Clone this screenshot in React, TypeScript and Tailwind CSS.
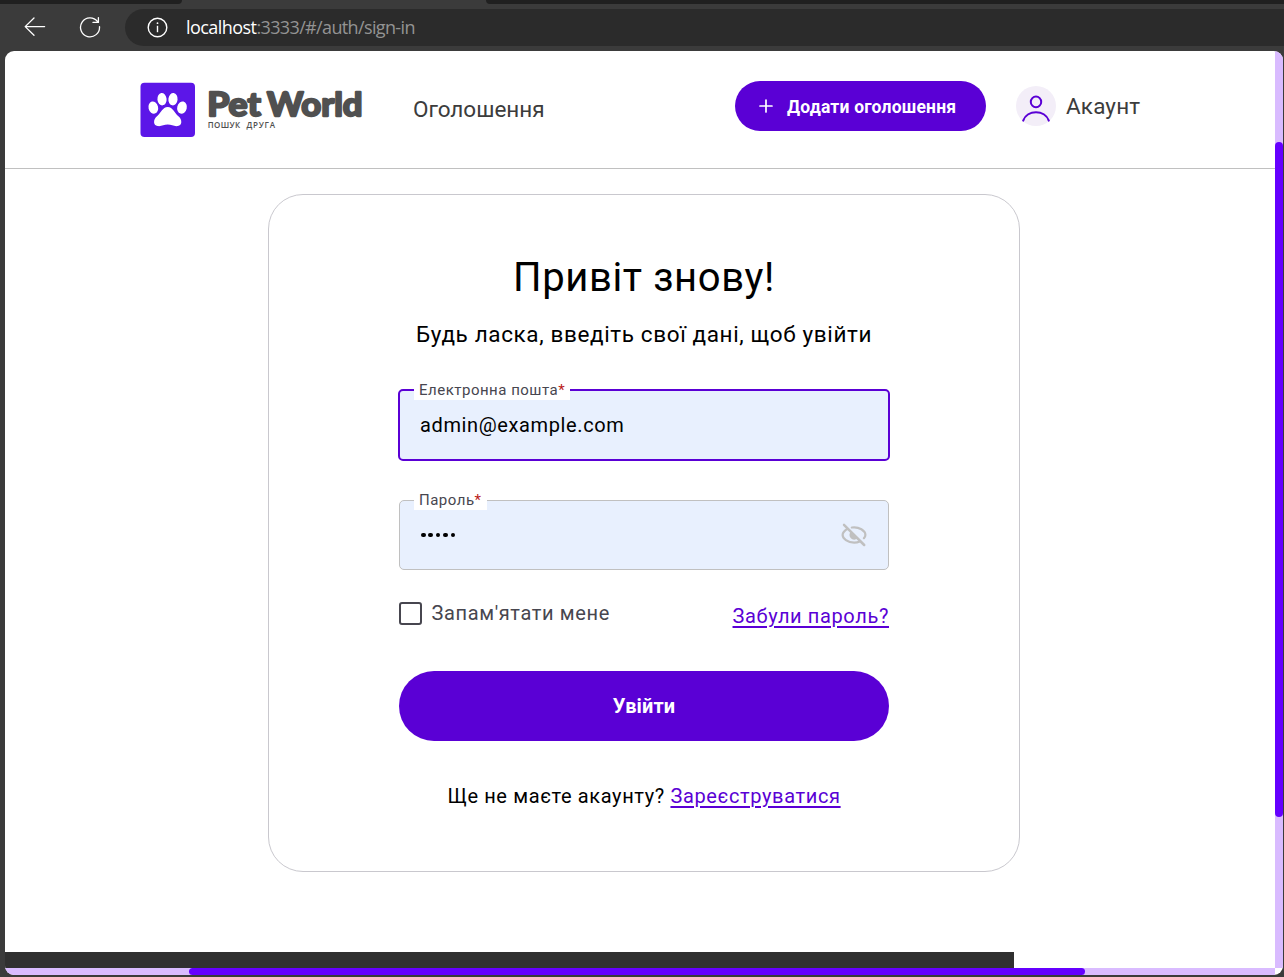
import React from 'react';

function BrowserBar() {
  return (
    <div className="h-[51px] bg-[#3b3b3b]">
      <div className="flex h-1 justify-between">
        <div className="h-1 w-[182px] rounded-br-[4px] bg-[#202020]" />
        <div className="h-1 w-[798px] rounded-bl-[4px] bg-[#202020]" />
      </div>
      <div className="flex h-[47px] pt-[5px]">
        <svg className="ml-6 mt-2 h-[22px] w-[22px]" viewBox="0 0 22 22" fill="none" stroke="#fff" strokeWidth="1.3" strokeLinecap="round" strokeLinejoin="round">
          <path d="M20.6 9.6H1.2M10 1L1.2 9.6L10 18.2" />
        </svg>
        <svg className="ml-[33px] mt-[7px] h-[22px] w-[22px]" viewBox="0 0 22 22" fill="none" stroke="#fff" strokeWidth="1.3" strokeLinecap="round" strokeLinejoin="round">
          <path d="M18.6 5.6A9.5 9.5 0 1 0 20.5 10.6M19.4 1.6V6.4H14" />
        </svg>
        <div className="ml-6 flex h-[37px] flex-1 items-center rounded-l-full bg-[#2b2b2b] pl-[22px]">
          <svg className="h-[21px] w-[21px]" viewBox="0 0 21 21" fill="none" stroke="#fff" strokeWidth="1.4">
            <circle cx="10.5" cy="10.5" r="9.3" />
            <path d="M10.5 8.8V15.2" />
            <circle cx="10.5" cy="6.2" r="0.9" fill="#fff" stroke="none" />
          </svg>
          <p className="-mt-px ml-[18px] whitespace-nowrap font-['Open_Sans','Noto_Sans',sans-serif] text-[18px] leading-6 tracking-[-0.64px] text-[#939393]">
            <span className="tracking-[-0.55px] text-white">localhost</span>:3333/#/auth/sign-in
          </p>
        </div>
      </div>
    </div>
  );
}

function Logo() {
  return (
    <svg className="h-[56px] w-[224px]" viewBox="0 0 224 56">
      <rect x="0.5" y="0.7" width="54.5" height="54.3" rx="4" fill="#5c16e8" />
      <g fill="#fff">
        <ellipse cx="22" cy="17.2" rx="4.6" ry="6.2" transform="rotate(-6 22 17.2)" />
        <ellipse cx="33" cy="17.2" rx="4.6" ry="6.2" transform="rotate(6 33 17.2)" />
        <ellipse cx="13.3" cy="25.6" rx="4.8" ry="6.2" transform="rotate(-14 13.3 25.6)" />
        <ellipse cx="42" cy="25.6" rx="4.8" ry="6.2" transform="rotate(14 42 25.6)" />
        <path d="M27.7 24.9C22.5 24.9 20.8 31.2 17 34.3C13 37.6 13 43.4 17.6 44.1C21.4 44.7 23.8 42.6 27.7 42.6C31.6 42.6 34 44.7 37.8 44.1C42.4 43.4 42.4 37.6 38.4 34.3C34.6 31.2 32.9 24.9 27.7 24.9Z" />
      </g>
      <g fill="#505050" fontFamily="'Lato','Inter',sans-serif">
        <text x="67.3" y="33.6" fontSize="33" fontWeight="700" stroke="#505050" strokeWidth="2.3" strokeLinejoin="round" textLength="53.5" lengthAdjust="spacingAndGlyphs">Pet</text>
        <text x="127" y="33.6" fontSize="33" fontWeight="700" stroke="#505050" strokeWidth="2.3" strokeLinejoin="round" textLength="95.5" lengthAdjust="spacingAndGlyphs">World</text>
        <text x="67.7" y="46" fontSize="8" fontWeight="600" fontFamily="'Open Sans',sans-serif" textLength="32.5">ПОШУК</text>
        <text x="106.5" y="46" fontSize="8" fontWeight="600" fontFamily="'Open Sans',sans-serif" textLength="28.5">ДРУГА</text>
      </g>
    </svg>
  );
}

function Header() {
  return (
    <header className="flex h-[118px] shrink-0 border-b border-[#c0c0c0] pl-[135px]">
      <div className="mt-[31px]"><Logo /></div>
      <nav className="ml-[49px] mt-[43px] w-[131px] whitespace-nowrap text-[22.5px] leading-[30px] text-[#3c3c3c]">Оголошення</nav>
      <button className="ml-[191px] mt-[30px] flex h-[50px] w-[251px] items-center rounded-full bg-[#5a00d5] pl-[23px] text-[17.5px] font-bold text-white">
        <svg className="h-4 w-4" viewBox="0 0 16 16" stroke="#fff" strokeWidth="1.7" strokeLinecap="round"><path d="M8 2V14M2 8H14" /></svg>
        <span className="ml-[13px] mt-[2px] whitespace-nowrap tracking-[0.2px]">Додати оголошення</span>
      </button>
      <div className="ml-[30px] mt-[35px] flex h-10 items-center">
        <svg className="h-10 w-10" viewBox="0 0 40 40" fill="none">
          <circle cx="20" cy="20" r="20" fill="#f3eef8" />
          <ellipse cx="20" cy="15.9" rx="5.2" ry="5.3" stroke="#5a00d5" strokeWidth="2" />
          <path d="M7.2 34.6C11 23.4 29 23.4 32.8 34.6" stroke="#5a00d5" strokeWidth="2.1" strokeLinecap="round" />
        </svg>
        <span className="ml-[10px] whitespace-nowrap text-[22.5px] leading-[30px] tracking-[0.15px] text-[#3c3c3c]">Акаунт</span>
      </div>
    </header>
  );
}

function FieldLabel({ children }: { children: React.ReactNode }) {
  return (
    <span className="absolute left-[14px] top-[-11px] h-[20px] whitespace-nowrap bg-white px-[5px] text-[15px] leading-[21px] tracking-[0.5px] text-[#47464f]">
      {children}<span className="text-[#ba1a1a]">*</span>
    </span>
  );
}

function SignInCard() {
  return (
    <main className="ml-[263px] mt-[25px] flex h-[678px] w-[752px] shrink-0 flex-col rounded-[35px] border border-[#c9c8ce] px-[130px] pt-[58px]">
      <h1 className="whitespace-nowrap text-center text-[40px] leading-[50px] tracking-[0.625px] text-black">Привіт знову!</h1>
      <p className="mt-[16px] whitespace-nowrap text-center text-[22.5px] leading-[30px] tracking-[0.625px] text-black">Будь ласка, введіть свої дані, щоб увійти</p>
      <div className="relative -mx-px mt-[40px] flex h-[72px] items-center rounded-[5px] border-2 border-[#5a00d5] bg-[#e8f0fe] px-5 text-[20px] tracking-[0.625px] text-black">
        <FieldLabel>Електронна пошта</FieldLabel>
        admin@example.com
      </div>
      <div className="relative mt-[39px] flex h-[70px] items-center justify-between rounded-[5px] border border-[#c0c0c0] bg-[#e8f0fe] px-[20px]">
        <FieldLabel>Пароль</FieldLabel>
        <div className="flex gap-[2.8px] pl-[1px]">
          {[0, 1, 2, 3, 4].map((i) => <i key={i} className="h-[4.6px] w-[4.6px] rounded-full bg-black" />)}
        </div>
        <svg className="h-[28px] w-[28px]" viewBox="0 0 28 28" fill="none" stroke="#c0c0c0" strokeWidth="2.2" strokeLinecap="round">
          <path d="M7.6 7.8C4.6 9.6 2.6 12.2 2.6 14C2.6 17.4 7.6 21.6 14.2 21.6C16.2 21.6 18.2 21.2 19.8 20.5M11.8 6.5C19.2 5.3 25.4 10 25.4 14C25.4 15.2 24.8 16.2 23.9 17.2" />
          <path d="M10.8 10.8L17.4 17.3A4.5 4.5 0 0 1 10.8 10.8Z" fill="#c0c0c0" stroke="none" />
          <path d="M4 3.8L24.2 24" strokeWidth="2.5" />
        </svg>
      </div>
      <div className="mt-[28px] flex justify-between whitespace-nowrap text-[20px] leading-[30px] tracking-[0.625px]">
        <div className="flex text-[#47464f]">
          <span className="mr-[9.5px] mt-1 h-[23px] w-[23px] rounded-[3px] border-2 border-[#47464f]" />
          Запам'ятати мене
        </div>
        <a className="mt-[3px] text-[#5a00d5] underline decoration-2 underline-offset-[3px]">Забули пароль?</a>
      </div>
      <button className="mt-[40px] h-[70px] shrink-0 rounded-full bg-[#5a00d5] text-[20px] font-bold tracking-[0.12px] text-white">Увійти</button>
      <p className="mt-[40px] whitespace-nowrap text-center text-[20px] leading-[30px] tracking-[0.625px] text-black">
        Ще не маєте акаунту? <a className="text-[#5a00d5] underline decoration-2 underline-offset-[3px]">Зареєструватися</a>
      </p>
    </main>
  );
}

export default function App() {
  return (
    <div className="h-[977px] w-[1284px] overflow-hidden bg-[#3b3b3b] font-['Roboto','Liberation_Sans',sans-serif]">
      <BrowserBar />
      <div className="ml-[5px] h-[924px] w-[1278px] overflow-hidden rounded-[9px] bg-white">
        <div className="flex h-[917px]">
          <div className="flex w-[1270px] flex-col">
            <Header />
            <SignInCard />
            <footer className="mt-auto h-4 w-[1009px] bg-[#303030]" />
          </div>
          <div className="w-[8px] bg-[#d9bbff] pt-[91px]">
            <div className="h-[675px] w-[7.5px] rounded-full bg-[#6500ff]" />
          </div>
        </div>
        <div className="h-[7px] w-[1270px] bg-[#d9bbff] pl-[184px]">
          <div className="h-[7px] w-[896px] rounded-full bg-[#6500ff]" />
        </div>
      </div>
    </div>
  );
}
